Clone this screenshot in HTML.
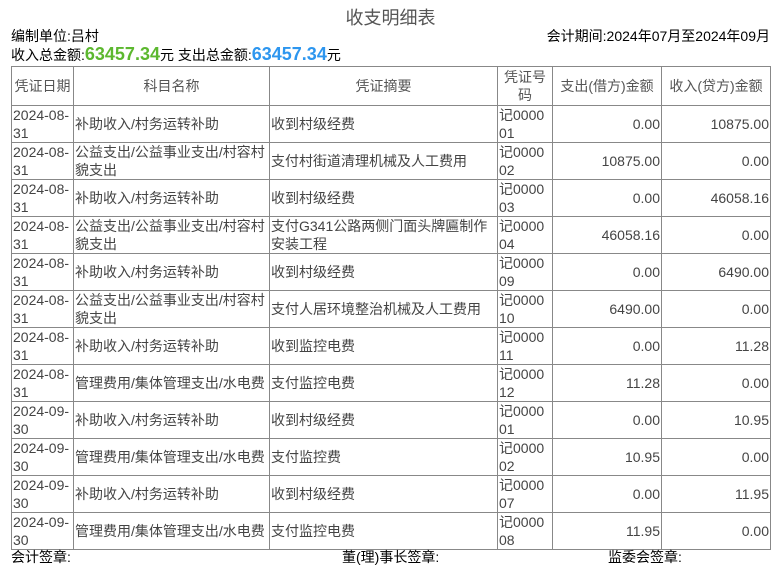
<!DOCTYPE html>
<html><head><meta charset="utf-8"><style>
body{margin:0;width:781px;height:576px;background:#fff;font-family:"Liberation Sans","Noto Sans CJK SC",sans-serif;color:#000;font-size:14px;position:relative;overflow:hidden}
.t{position:absolute;top:4px;left:0;width:781px;text-align:center;font-size:18px;color:#555}
.a{position:absolute;top:26px;left:11px}
.b{position:absolute;top:26px;right:11px}
.c{position:absolute;top:44px;left:11px}
.g{color:#5cb82f;font-weight:bold;font-size:18px}
.bl{color:#2d96ef;font-weight:bold;font-size:18px}
table{position:absolute;top:66px;left:11px;width:759px;border-collapse:collapse;table-layout:fixed;color:#444;font-size:14px}
td{border:1px solid #888;padding:0 1px;line-height:18px;height:35px;vertical-align:middle;overflow:hidden;word-break:break-all}
tr.h td{height:38px;text-align:center;color:#555}
.r{text-align:right}
.f{position:absolute;top:547px}
</style></head><body>
<div class="t">收支明细表</div>
<div class="a">编制单位:吕村</div>
<div class="b">会计期间:2024年07月至2024年09月</div>
<div class="c">收入总金额:<span class="g">63457.34</span>元 支出总金额:<span class="bl">63457.34</span>元</div>
<table>
<colgroup><col style="width:62px"><col style="width:196px"><col style="width:228px"><col style="width:55px"><col style="width:109px"><col style="width:109px"></colgroup>
<tr class="h"><td>凭证日期</td><td>科目名称</td><td>凭证摘要</td><td>凭证号码</td><td>支出(借方)金额</td><td>收入(贷方)金额</td></tr>
<tr><td>2024-08-31</td><td>补助收入/村务运转补助</td><td>收到村级经费</td><td>记000001</td><td class="r">0.00</td><td class="r">10875.00</td></tr>
<tr><td>2024-08-31</td><td>公益支出/公益事业支出/村容村貌支出</td><td>支付村街道清理机械及人工费用</td><td>记000002</td><td class="r">10875.00</td><td class="r">0.00</td></tr>
<tr><td>2024-08-31</td><td>补助收入/村务运转补助</td><td>收到村级经费</td><td>记000003</td><td class="r">0.00</td><td class="r">46058.16</td></tr>
<tr><td>2024-08-31</td><td>公益支出/公益事业支出/村容村貌支出</td><td>支付G341公路两侧门面头牌匾制作安装工程</td><td>记000004</td><td class="r">46058.16</td><td class="r">0.00</td></tr>
<tr><td>2024-08-31</td><td>补助收入/村务运转补助</td><td>收到村级经费</td><td>记000009</td><td class="r">0.00</td><td class="r">6490.00</td></tr>
<tr><td>2024-08-31</td><td>公益支出/公益事业支出/村容村貌支出</td><td>支付人居环境整治机械及人工费用</td><td>记000010</td><td class="r">6490.00</td><td class="r">0.00</td></tr>
<tr><td>2024-08-31</td><td>补助收入/村务运转补助</td><td>收到监控电费</td><td>记000011</td><td class="r">0.00</td><td class="r">11.28</td></tr>
<tr><td>2024-08-31</td><td>管理费用/集体管理支出/水电费</td><td>支付监控电费</td><td>记000012</td><td class="r">11.28</td><td class="r">0.00</td></tr>
<tr><td>2024-09-30</td><td>补助收入/村务运转补助</td><td>收到村级经费</td><td>记000001</td><td class="r">0.00</td><td class="r">10.95</td></tr>
<tr><td>2024-09-30</td><td>管理费用/集体管理支出/水电费</td><td>支付监控费</td><td>记000002</td><td class="r">10.95</td><td class="r">0.00</td></tr>
<tr><td>2024-09-30</td><td>补助收入/村务运转补助</td><td>收到村级经费</td><td>记000007</td><td class="r">0.00</td><td class="r">11.95</td></tr>
<tr><td>2024-09-30</td><td>管理费用/集体管理支出/水电费</td><td>支付监控电费</td><td>记000008</td><td class="r">11.95</td><td class="r">0.00</td></tr>
</table>
<div class="f" style="left:11px">会计签章:</div>
<div class="f" style="left:342px">董(理)事长签章:</div>
<div class="f" style="left:608px">监委会签章:</div>
</body></html>
